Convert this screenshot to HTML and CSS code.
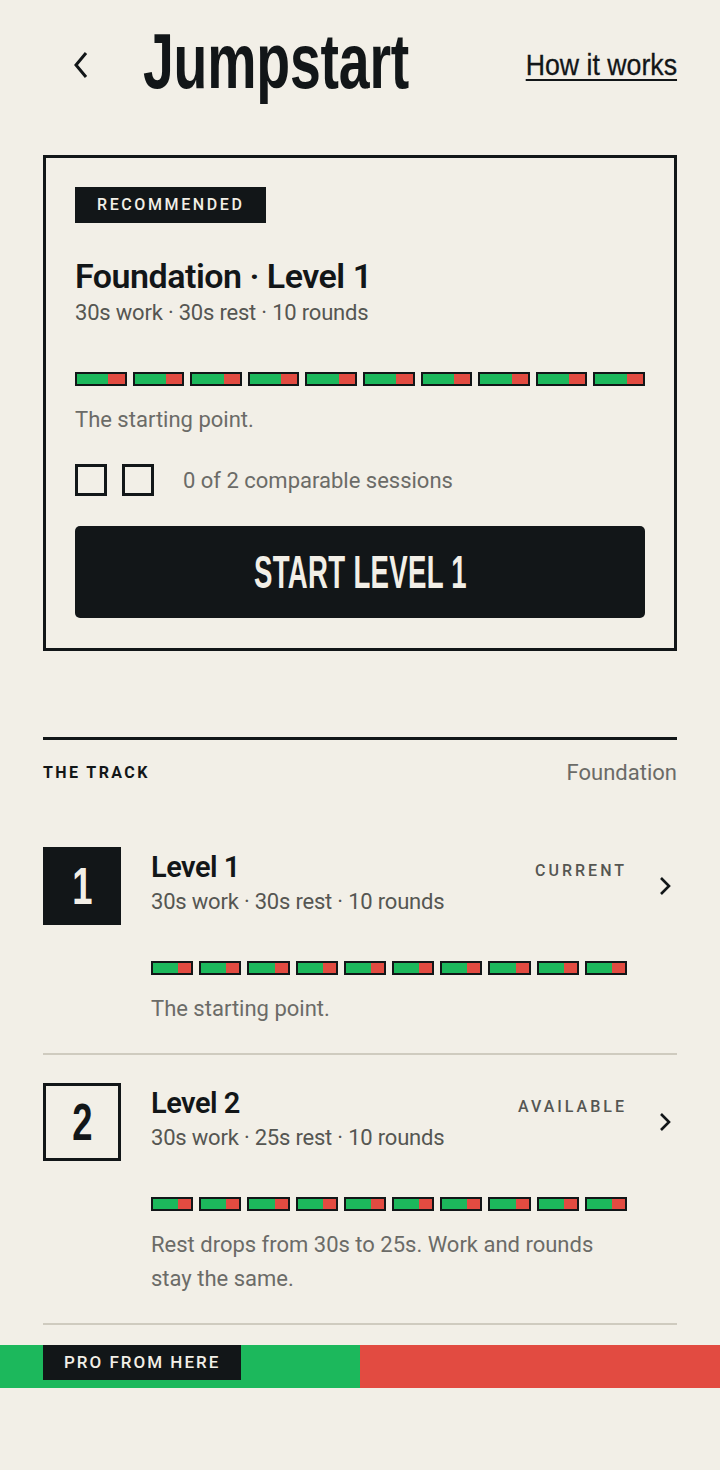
FILE: index.html
```html
<!DOCTYPE html>
<html lang="en">
<head>
    <meta charset="UTF-8">
    <meta name="viewport" content="width=device-width, initial-scale=1.0">
    <title>Jumpstart</title>
    <link rel="stylesheet" href="styles.css">
</head>
<body>
    <div class="page">
        <header class="top">
            <a class="back" href="#" aria-label="Back">
                <svg width="16" height="28" viewBox="0 0 16 28"><path d="M13 2 L3 14 L13 26" fill="none" stroke="#121618" stroke-width="3"/></svg>
            </a>
            <h1><span class="narrow">Jumpstart</span></h1>
            <a class="how" href="#"><span>How it works</span></a>
        </header>

        <section class="card">
            <span class="badge">RECOMMENDED</span>
            <h2>Foundation · Level 1</h2>
            <p class="meta">30s work · 30s rest · 10 rounds</p>
            <div class="rounds rounds-lg">
                <span class="seg"><i></i></span><span class="seg"><i></i></span><span class="seg"><i></i></span><span class="seg"><i></i></span><span class="seg"><i></i></span>
                <span class="seg"><i></i></span><span class="seg"><i></i></span><span class="seg"><i></i></span><span class="seg"><i></i></span><span class="seg"><i></i></span>
            </div>
            <p class="desc">The starting point.</p>
            <div class="sessions">
                <span class="check"></span>
                <span class="check"></span>
                <span class="sessions-text">0 of 2 comparable sessions</span>
            </div>
            <button class="start"><span class="narrow">START LEVEL 1</span></button>
        </section>

        <section class="track">
            <div class="track-head">
                <span class="track-label">THE TRACK</span>
                <span class="track-name">Foundation</span>
            </div>

            <div class="level">
                <div class="num num-current"><span class="narrow">1</span></div>
                <div class="level-main">
                    <div class="level-head">
                        <div>
                            <h3>Level 1</h3>
                            <p class="meta">30s work · 30s rest · 10 rounds</p>
                        </div>
                        <span class="status">CURRENT</span>
                    </div>
                    <div class="rounds">
                        <span class="seg"><i></i></span><span class="seg"><i></i></span><span class="seg"><i></i></span><span class="seg"><i></i></span><span class="seg"><i></i></span>
                        <span class="seg"><i></i></span><span class="seg"><i></i></span><span class="seg"><i></i></span><span class="seg"><i></i></span><span class="seg"><i></i></span>
                    </div>
                    <p class="desc">The starting point.</p>
                </div>
                <div class="go">
                    <svg width="12" height="20" viewBox="0 0 12 20"><path d="M2 2 L10 10 L2 18" fill="none" stroke="#121618" stroke-width="2.6"/></svg>
                </div>
            </div>

            <div class="level">
                <div class="num"><span class="narrow">2</span></div>
                <div class="level-main">
                    <div class="level-head">
                        <div>
                            <h3>Level 2</h3>
                            <p class="meta">30s work · 25s rest · 10 rounds</p>
                        </div>
                        <span class="status">AVAILABLE</span>
                    </div>
                    <div class="rounds">
                        <span class="seg"><i></i></span><span class="seg"><i></i></span><span class="seg"><i></i></span><span class="seg"><i></i></span><span class="seg"><i></i></span>
                        <span class="seg"><i></i></span><span class="seg"><i></i></span><span class="seg"><i></i></span><span class="seg"><i></i></span><span class="seg"><i></i></span>
                    </div>
                    <p class="desc">Rest drops from 30s to 25s. Work and rounds stay the same.</p>
                </div>
                <div class="go">
                    <svg width="12" height="20" viewBox="0 0 12 20"><path d="M2 2 L10 10 L2 18" fill="none" stroke="#121618" stroke-width="2.6"/></svg>
                </div>
            </div>
        </section>
    </div>

    <div class="pro-bar">
        <span class="pro-tag">PRO FROM HERE</span>
    </div>
</body>
</html>
```

FILE: styles.css
```css
body {
    margin: 0;
    background-color: #f2efe7;
    color: #121618;
    font-family: Roboto, "Liberation Sans", sans-serif;
}
.page {
    padding: 0 43px;
}
p {
    margin: 0;
}
/* tall condensed display type */
.narrow {
    display: inline-block;
    font-family: "Liberation Sans", Arial, sans-serif;
    font-weight: bold;
    white-space: nowrap;
    transform: scaleX(0.72);
}

/* header */
.top {
    display: flex;
    align-items: center;
    height: 130px;
}
.back {
    display: flex;
    margin-left: 30px;
    width: 40px;
}
.top h1 {
    flex: none;
    width: 270px;
    margin: 0 0 6px 30px;
    font-size: 77px;
    line-height: 1;
}
.top h1 .narrow {
    transform-origin: left center;
    letter-spacing: -0.3px;
}
.how {
    flex: none;
    margin-left: auto;
    color: #121618;
    text-decoration: none;
    white-space: nowrap;
}
.how span {
    display: inline-block;
    font-family: "Liberation Sans", Arial, sans-serif;
    font-size: 30px;
    transform: scaleX(0.89);
    transform-origin: right center;
    text-decoration: underline;
    text-decoration-thickness: 2px;
    text-underline-offset: 4px;
    -webkit-text-stroke: 0.3px #121618;
}

/* recommended card */
.card {
    margin-top: 25px;
    border: 3px solid #121618;
    padding: 29px 29px 30px;
}
.badge {
    display: inline-block;
    background-color: #121618;
    color: #f2efe7;
    font-size: 16px;
    font-weight: 500;
    letter-spacing: 2.6px;
    line-height: 36px;
    padding: 0 22px;
}
.card h2 {
    margin: 33px 0 0;
    font-size: 34px;
    font-weight: 600;
    letter-spacing: -0.5px;
    line-height: 40px;
}
.meta {
    color: #555652;
    font-size: 22px;
    line-height: 34px;
    letter-spacing: -0.2px;
}
.rounds {
    display: flex;
    gap: 6px;
    margin-top: 42px;
}
.rounds-lg {
    margin-top: 42px;
}
.seg {
    flex: 1;
    display: flex;
    justify-content: flex-end;
    height: 14px;
    box-sizing: border-box;
    border: 2px solid #121618;
    background-color: #1cb85c;
}
.seg i {
    width: 34%;
    background-color: #e24b41;
}
.desc {
    margin-top: 17px;
    color: #6b6b67;
    font-size: 22px;
    line-height: 34px;
}
.sessions {
    display: flex;
    align-items: center;
    gap: 15px;
    margin-top: 27px;
}
.check {
    width: 32px;
    height: 32px;
    box-sizing: border-box;
    border: 3px solid #121618;
}
.sessions-text {
    margin-left: 14px;
    color: #6b6b67;
    font-size: 22px;
}
.start {
    display: block;
    width: 100%;
    height: 92px;
    margin-top: 30px;
    border: none;
    border-radius: 5px;
    background-color: #121618;
    color: #f2efe7;
    font-size: 46px;
    line-height: 1;
    cursor: pointer;
}
.start .narrow {
    transform: scaleX(0.6);
    letter-spacing: 0.5px;
}

/* the track */
.track {
    margin-top: 86px;
    border-top: 3px solid #121618;
}
.track-head {
    display: flex;
    justify-content: space-between;
    align-items: center;
    padding: 20px 0 62px;
}
.track-label {
    font-size: 16px;
    font-weight: 700;
    letter-spacing: 2.4px;
}
.track-name {
    color: #6b6b67;
    font-size: 22px;
}
.level {
    display: flex;
    padding: 0 0 27px;
    margin-bottom: 28px;
    border-bottom: 2px solid #cfcbbf;
}
.num {
    flex: none;
    display: flex;
    align-items: center;
    justify-content: center;
    width: 78px;
    height: 78px;
    box-sizing: border-box;
    border: 3px solid #121618;
    font-size: 52px;
    line-height: 1;
}
.num .narrow {
    transform: scaleX(0.7);
}
.num-current {
    background-color: #121618;
    color: #f2efe7;
}
.level-main {
    flex: 1;
    margin-left: 30px;
}
.level-head {
    display: flex;
    justify-content: space-between;
    align-items: flex-start;
}
.level h3 {
    margin: 2px 0 0;
    font-size: 29px;
    font-weight: 600;
    letter-spacing: -0.5px;
    line-height: 36px;
}
.status {
    margin-top: 14px;
    color: #555652;
    font-size: 16px;
    font-weight: 500;
    letter-spacing: 3px;
}
.go {
    flex: none;
    width: 50px;
    height: 78px;
    display: flex;
    align-items: center;
    justify-content: flex-end;
    padding-right: 6px;
    box-sizing: border-box;
}

/* pro divider */
.pro-bar {
    margin-top: -8px;
    height: 43px;
    background: linear-gradient(to right, #1cb85c 50%, #e24b41 50%);
    padding-left: 43px;
}
.pro-tag {
    display: inline-block;
    background-color: #121618;
    color: #f2efe7;
    font-size: 17px;
    font-weight: 500;
    letter-spacing: 2px;
    line-height: 35px;
    padding: 0 21px;
}
```
